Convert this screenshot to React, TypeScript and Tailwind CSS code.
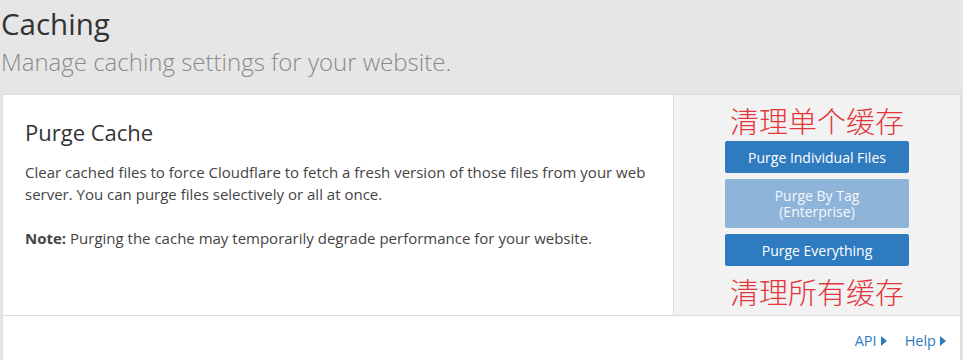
import React from "react";

function Caret() {
  return (
    <svg width="6" height="10" viewBox="0 0 6 10" className="inline-block ml-[4px]" aria-hidden>
      <path d="M0 0 L6 5 L0 10 Z" fill="#2f7bbf" />
    </svg>
  );
}

export default function App() {
  const sans = { fontFamily: '"Open Sans", "Noto Sans", sans-serif' };
  const cjk = { fontFamily: '"Noto Sans CJK SC", sans-serif' };
  return (
    <div className="w-[963px] h-[360px] overflow-hidden bg-[#e6e6e6]" style={sans}>
      <div className="pl-[1px] pt-[5px] pb-[16px]">
        <h1 className="text-[29.5px] leading-[38px] text-[#333] font-normal">Caching</h1>
        <p className="text-[24px] leading-[32px] text-[#8a8a8a] font-light mt-[3px]">
          Manage caching settings for your website.
        </p>
      </div>
      <div className="mx-[2px] bg-white border border-[#dcdcdc]">
        <div className="flex h-[221px] border-b border-[#dcdcdc]">
          <div className="flex-1 pl-[22px] pt-[22px] pr-[16px]">
            <h2 className="text-[22px] leading-[30px] text-[#333] font-normal">Purge Cache</h2>
            <p className="mt-[14px] text-[15px] leading-[22px] text-[#444]">
              Clear cached files to force Cloudflare to fetch a fresh version of those files from your web server. You can purge files selectively or all at once.
            </p>
            <p className="mt-[22px] text-[15px] leading-[22px] text-[#444]">
              <span className="font-bold">Note:</span> Purging the cache may temporarily degrade performance for your website.
            </p>
          </div>
          <div className="w-[287px] bg-[#f2f2f2] border-l border-[#dcdcdc] flex flex-col items-center pt-[6px]">
            <div className="text-[29px] leading-[38px] text-[#e3363c] font-light" style={cjk}>清理单个缓存</div>
            <div className="flex flex-col gap-[6px] w-[184px] mt-[2px]">
              <button className="h-[32px] rounded-[2px] bg-[#2f7bbf] text-white text-[14px]" style={sans}>
                Purge Individual Files
              </button>
              <button className="h-[49px] rounded-[2px] bg-[#8fb4da] text-white/90 text-[14px] leading-[16px] flex flex-col items-center justify-center" style={sans}>
                <span>Purge By Tag</span>
                <span>(Enterprise)</span>
              </button>
              <button className="h-[32px] rounded-[2px] bg-[#2f7bbf] text-white text-[14px]" style={sans}>
                Purge Everything
              </button>
            </div>
            <div className="mt-[6px] text-[29px] leading-[38px] text-[#e3363c] font-light" style={cjk}>清理所有缓存</div>
          </div>
        </div>
        <div className="h-[60px] flex justify-end items-start pt-[14px] pr-[14px] gap-[18px] text-[14.5px] text-[#2f7bbf]">
          <a className="flex items-center">API<Caret /></a>
          <a className="flex items-center">Help<Caret /></a>
        </div>
      </div>
    </div>
  );
}
